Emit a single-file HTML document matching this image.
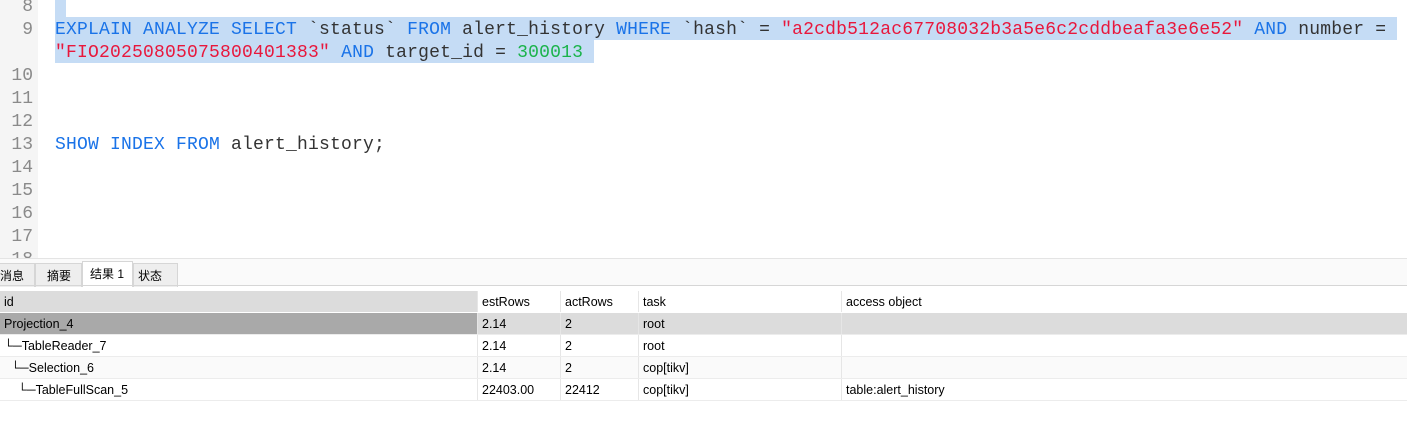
<!DOCTYPE html>
<html><head><meta charset="utf-8"><style>
*{margin:0;padding:0;box-sizing:border-box}
body{width:1407px;height:434px;overflow:hidden;background:#fff;position:relative;font-family:"Liberation Sans","Noto Sans CJK SC",sans-serif}
.ed{position:absolute;left:0;top:0;width:1407px;height:258px;overflow:hidden;background:#fff}
.gut{position:absolute;left:0;top:0;width:38px;height:258px;background:#f5f5f5}
.ln{position:absolute;right:1371px;width:38px;text-align:right;font:18px/23px "Liberation Mono",monospace;color:#8a8a8a;padding-right:3px}
.code{position:absolute;left:55px;font:18px/23px "Liberation Mono",monospace;color:#333;white-space:pre;letter-spacing:0.2px}
.sel{position:absolute;background:#c5dcf5}
.k{color:#1a73e8}.s{color:#e8173c}.n{color:#1ab34a}
.tabbar{position:absolute;left:0;top:258px;width:1407px;height:28px;background:#fafafa;border-top:1px solid #e4e4e4}
.tab{position:absolute;top:4px;height:24px;background:#eeeeee;border:1px solid #d6d6d6;border-bottom:none;font-size:12px;line-height:24px;padding-left:11px;color:#000}
.tab.a{background:#fff;top:2px;height:26px}
.tline{position:absolute;left:0;top:285px;width:1407px;height:1px;background:#d6d6d6}
.row{position:absolute;left:0;width:1407px;height:22px;font-size:12.5px;line-height:22px;color:#000;border-bottom:1px solid #ececec}
.c{position:absolute;top:0;height:21px;padding-left:4px;white-space:pre;border-right:1px solid #e6e6e6}
</style></head><body>
<div class="ed">
<div class="gut"></div>
<div class="sel" style="left:55px;top:0;width:11px;height:17px"></div>
<div class="sel" style="left:55px;top:17px;width:1342px;height:23px"></div>
<div class="sel" style="left:55px;top:40px;width:539px;height:23px"></div>
<div class="ln" style="top:-4px">8</div>
<div class="ln" style="top:19px">9</div>
<div class="ln" style="top:65px">10</div>
<div class="ln" style="top:88px">11</div>
<div class="ln" style="top:111px">12</div>
<div class="ln" style="top:134px">13</div>
<div class="ln" style="top:157px">14</div>
<div class="ln" style="top:180px">15</div>
<div class="ln" style="top:203px">16</div>
<div class="ln" style="top:226px">17</div>
<div class="ln" style="top:249px">18</div>
<div class="code" style="top:19px"><span class="k">EXPLAIN ANALYZE SELECT</span> `status` <span class="k">FROM</span> alert_history <span class="k">WHERE</span> `hash` = <span class="s">"a2cdb512ac67708032b3a5e6c2cddbeafa3e6e52"</span> <span class="k">AND</span> number =</div>
<div class="code" style="top:42px"><span class="s">"FIO20250805075800401383"</span> <span class="k">AND</span> target_id = <span class="n">300013</span></div>
<div class="code" style="top:134px"><span class="k">SHOW INDEX FROM</span> alert_history;</div>
</div>
<div class="tabbar">
<div class="tab" style="left:-12px;width:47px">消息</div>
<div class="tab" style="left:35px;width:47px">摘要</div>
<div class="tab a" style="left:82px;width:51px;padding-left:7px">结果 1</div>
<div class="tab" style="left:133px;width:45px;padding-left:4px">状态</div>
</div>
<div class="tline"></div>
<div class="row" style="top:291px;border-bottom:none"><div class="c" style="left:0;width:478px;background:#dcdcdc">id</div><div class="c" style="left:478px;width:83px">estRows</div><div class="c" style="left:561px;width:78px">actRows</div><div class="c" style="left:639px;width:203px">task</div><div class="c" style="left:842px;width:565px;border:none">access object</div></div>
<div class="row" style="top:313px;background:#dcdcdc"><div class="c" style="left:0;width:478px;background:#a9a9a9">Projection_4</div><div class="c" style="left:478px;width:83px">2.14</div><div class="c" style="left:561px;width:78px">2</div><div class="c" style="left:639px;width:203px">root</div></div>
<div class="row" style="top:335px"><div class="c" style="left:0;width:478px">└─TableReader_7</div><div class="c" style="left:478px;width:83px">2.14</div><div class="c" style="left:561px;width:78px">2</div><div class="c" style="left:639px;width:203px">root</div></div>
<div class="row" style="top:357px;background:#fafafa"><div class="c" style="left:0;width:478px">  └─Selection_6</div><div class="c" style="left:478px;width:83px">2.14</div><div class="c" style="left:561px;width:78px">2</div><div class="c" style="left:639px;width:203px">cop[tikv]</div></div>
<div class="row" style="top:379px"><div class="c" style="left:0;width:478px">    └─TableFullScan_5</div><div class="c" style="left:478px;width:83px">22403.00</div><div class="c" style="left:561px;width:78px">22412</div><div class="c" style="left:639px;width:203px">cop[tikv]</div><div class="c" style="left:842px;width:565px;border:none">table:alert_history</div></div>
</body></html>
